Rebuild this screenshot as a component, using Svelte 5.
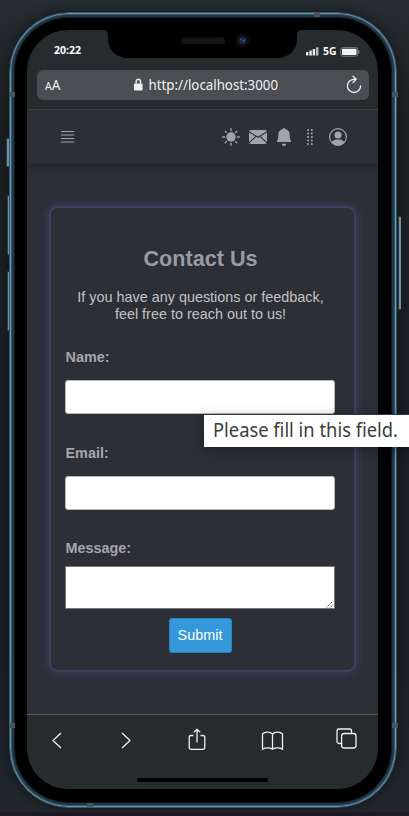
<script>
  const frameMarks = [
    { x: 314, y: 12, w: 6, h: 5 },
    { x: 9, y: 92, w: 6, h: 5 },
    { x: 392, y: 92, w: 6, h: 5 },
    { x: 9, y: 723, w: 6, h: 5 },
    { x: 392, y: 723, w: 6, h: 5 },
    { x: 87, y: 803, w: 6, h: 5 }
  ];
  const sideKeys = [
    { x: 6, y: 138, w: 3, h: 29 },
    { x: 7, y: 195, w: 2, h: 60 },
    { x: 7, y: 271, w: 2, h: 60 },
    { x: 398, y: 216, w: 3, h: 94 }
  ];
  const rays = [0, 45, 90, 135, 180, 225, 270, 315];
  const dots = [0, 1, 2, 3, 4];
</script>

<div class="desk">
  {#each sideKeys as k}
    <i class="key" style="left:{k.x}px;top:{k.y}px;width:{k.w}px;height:{k.h}px"></i>
  {/each}
  <div class="phone">
    <div class="screen">
      <div class="status">
        <b class="time"><svg width="28" height="14"><text x="0" y="11" textLength="27" lengthAdjust="spacingAndGlyphs">20:22</text></svg></b>
        <div class="signal">
          <svg width="54" height="14" viewBox="0 0 54 14">
            <g fill="#eee"><rect x="0" y="9" width="2.4" height="3.5" rx=".5" /><rect x="3.4" y="7.5" width="2.4" height="5" rx=".5" /><rect x="6.7" y="6" width="2.4" height="6.5" rx=".5" /><rect x="10" y="4.3" width="2.4" height="8.2" rx=".5" opacity=".75" /></g>
            <text x="17" y="12" textLength="13.5" lengthAdjust="spacingAndGlyphs">5G</text>
            <rect x="34.8" y="4.6" width="17" height="8.6" rx="2.2" fill="none" stroke="#8c9092" stroke-width=".8" />
            <rect x="36" y="5.8" width="14.6" height="6.2" rx="1.3" fill="#f4f4f4" />
            <path d="M52.8 7.4v3" stroke="#8c9092" />
          </svg>
        </div>
      </div>

      <div class="address">
        <span class="aa"><small>A</small>A</span>
        <svg class="url" width="148" height="22" viewBox="0 0 148 22">
          <path d="M3.1 9.5V7.7a2.2 2.5 0 0 1 4.4 0V9.5" fill="none" stroke="#f0f0f0" stroke-width="1.4" />
          <rect x="1" y="9.5" width="8.6" height="7" rx="1" fill="#f0f0f0" />
          <text x="15.5" y="16" textLength="129.5" lengthAdjust="spacingAndGlyphs">http://localhost:3000</text>
        </svg>
        <svg class="reload" width="18" height="22" viewBox="0 0 18 22" fill="none" stroke="#eee" stroke-width="1.3" stroke-linecap="round" stroke-linejoin="round"><path d="M10.300 5.300H9a6.600 6.600 0 1 0 6.600 6.600M8 2.200l3.200 3.100L8 8.500" /></svg>
      </div>

      <nav>
        <svg class="menu" width="14" height="13" viewBox="0 0 14 13"><path d="M0 1.500h13.300M0 5h13.300M0 8.500h13.300M0 12h13.300" stroke="#a19fa6" stroke-width="1.2" /></svg>
        <div class="icons">
          <svg width="18" height="18" viewBox="0 0 18 18"><circle cx="9" cy="9" r="4.7" fill="#a5a3aa" />{#each rays as r}<path d="M9 .7v2" stroke="#a5a3aa" stroke-width="1.3" stroke-linecap="round" transform="rotate({r} 9 9)" />{/each}</svg>
          <svg width="18" height="18" viewBox="0 0 18 18"><rect x="0" y="2" width="18" height="14" rx="2" fill="#a5a3aa" /><path d="M0 3.700l9 5.600 9-5.600M0 14.800l6.600-6.200M18 14.800l-6.600-6.200" fill="none" stroke="#2c2f38" stroke-width="1.1" /></svg>
          <svg width="16" height="18" viewBox="0 0 16 18"><path d="M8 0a1 1 0 0 1 1 1.100c3 .6 4.700 2.700 4.700 5.600 0 4.100.8 6.100 1.800 7.400H.5c1-1.300 1.800-3.300 1.800-7.400 0-2.900 1.700-5 4.700-5.600A1 1 0 0 1 8 0zM5.800 15.700h4.400a2.200 2.200 0 0 1-4.400 0z" fill="#a5a3aa" /></svg>
          <svg width="6" height="18" viewBox="0 0 6 18" fill="#a5a3aa">{#each dots as d}<circle cx="1.1" cy={1.9 + d * 3.5} r="1" /><circle cx="4.8" cy={1.9 + d * 3.5} r="1" />{/each}</svg>
          <svg width="18" height="18" viewBox="0 0 18 18"><circle cx="9" cy="9" r="8.4" fill="none" stroke="#a5a3aa" stroke-width="1.2" /><circle cx="9" cy="7" r="3.5" fill="#a5a3aa" /><path d="M2.700 14C4.200 12.100 6.200 11.600 9 11.600s4.800.5 6.300 2.400A8 8 0 0 1 9 17.400 8 8 0 0 1 2.700 14z" fill="#a5a3aa" /></svg>
        </div>
      </nav>

      <main>
        <form>
          <h2>Contact Us</h2>
          <p>If you have any questions or feedback,<br />feel free to reach out to us!</p>
          <label for="name">Name:</label>
          <input id="name" type="text" />
          <label for="email">Email:</label>
          <input id="email" type="text" />
          <label for="message">Message:</label>
          <div class="area">
            <textarea id="message"></textarea>
            <svg class="grip" width="7" height="7" viewBox="0 0 7 7"><path d="M.5 6.500l6-6M4 6.500L6.500 4" stroke="#444" stroke-width=".9" stroke-dasharray="1.6 .5" /></svg>
          </div>
          <button type="button">Submit</button>
        </form>
      </main>

      <footer>
        <div class="tools">
          <svg width="10" height="17" viewBox="0 0 10 17"><path d="M9 1L1 8.500 9 16" /></svg>
          <svg width="10" height="17" viewBox="0 0 10 17"><path d="M1 1l8 7.500L1 16" /></svg>
          <svg width="18" height="22" viewBox="0 0 18 22"><path d="M5.500 5.500H3a1.800 1.800 0 0 0-1.800 1.800v10.200A1.800 1.800 0 0 0 3 19.300h12a1.800 1.800 0 0 0 1.800-1.800V7.300A1.800 1.800 0 0 0 15 5.500h-2.500M9 12.500V-.8M5.700 2.400L9-.8l3.300 3.200" /></svg>
          <svg width="23" height="20" viewBox="0 0 22 20"><path d="M11 3.200C8.800.6 3.400.4 1 3v15.300c2.800-1.800 7.400-1.800 10 0 2.600-1.800 7.200-1.800 10 0V3C18.600.4 13.200.6 11 3.200zM11 3.200v15" /></svg>
          <svg width="21" height="21" viewBox="0 0 21 21"><rect x="5.600" y="5.500" width="14.400" height="14.500" rx="2.500" /><path d="M5.500 15.500H3A2 2 0 0 1 1 13.500V3A2 2 0 0 1 3 1h10.500A2 2 0 0 1 15.500 3v2.500" /></svg>
        </div>
        <div class="home"></div>
      </footer>
    </div>
  </div>

  <svg class="notch" width="199" height="30" viewBox="0 0 199 30">
    <path d="M0 0h199c-3.500 0-5 1.500-5 5v3c0 12-8 20-20 20H25C13 28 5 20 5 8V5c0-3.500-1.500-5-5-5z" fill="#000" />
    <rect x="78" y="7.5" width="44" height="6.5" rx="3.2" fill="#151515" />
    <circle cx="139.5" cy="10.5" r="7" fill="#0c0d0f" />
    <circle cx="139.5" cy="10.5" r="3.7" fill="#1a2547" />
    <circle cx="138" cy="9.5" r="1.1" fill="#49448a" /><circle cx="141" cy="10.5" r="1.2" fill="#355c9b" />
  </svg>
  {#each frameMarks as m}
    <i class="mark" style="left:{m.x}px;top:{m.y}px;width:{m.w}px;height:{m.h}px"></i>
  {/each}
  <div class="tip"><svg width="205" height="32"><text x="9" y="22" textLength="185" lengthAdjust="spacingAndGlyphs">Please fill in this field.</text></svg></div>
</div>

<style>
  :global(body) { margin: 0; background: #202428; }
  * { box-sizing: border-box; }
  svg { display: block; flex: none; overflow: visible; }
  .desk {
    position: relative; width: 409px; height: 816px; overflow: hidden;
    padding: 12px 12px 8px 9px;
    background: linear-gradient(180deg, #272c30 0, #1c2023 15%, #1c1f24 80%, #22272b 99.5%, #1f1924 99.6%);
    font-family: "Liberation Sans", Arial, sans-serif;
  }
  .phone {
    height: 796px; border: 1px solid #36566a; border-radius: 60px;
    padding: 17px 18px 18px 17px; background: #000;
    box-shadow: inset 0 0 0 1px #6d91a5, inset 0 0 0 2px #36566a, inset 0 0 0 4px #203645, inset 0 0 0 5px #10191f, 0 0 12px #0b0e12aa;
  }
  .screen {
    width: 351px; height: 759px; border-radius: 41px; overflow: hidden;
    display: flex; flex-direction: column; background: #262b2e;
  }
  .status { height: 40px; padding: 13px 18.5px 0 27px; display: flex; justify-content: space-between; }
  .status text { font: 700 11px "Open Sans", "Noto Sans", sans-serif; fill: #fff; }
  .address {
    height: 30px; margin: 0 9px 9px 10px; padding: 0 6px 0 8px; border-radius: 6px;
    background: #4a4d52; display: flex; align-items: center; justify-content: space-between; color: #eee;
  }
  .aa { font: 13.5px "Noto Sans", sans-serif; width: 30px; }
  .aa small { font-size: 10.5px; }
  .url { margin-right: auto; margin-left: 58px; }
  .url text { font: 13.5px "Noto Sans", sans-serif; fill: #f0f0f0; }
  nav {
    height: 55px; flex: none; position: relative; border-top: 1px solid #3c4143; background: #2c2f38;
    padding: 0 31.500px 0 34px; display: flex; align-items: center; justify-content: space-between;
    box-shadow: 0 2px 5px #191b20aa;
  }
  .menu { margin-bottom: 1px; }
  .icons { display: flex; align-items: center; }
  .icons svg:nth-child(2) { margin-left: 9px; }
  .icons svg:nth-child(3) { margin-left: 9px; }
  .icons svg:nth-child(4) { margin-left: 15.500px; }
  .icons svg:nth-child(5) { margin-left: 15.500px; }
  main { flex: 1; min-height: 0; padding: 44px 24px; background: #2c2f38; }
  form {
    width: 303px; height: 462px; border-radius: 7px; padding: 37px 20px 0 14px;
    background: #2c2f36; box-shadow: 0 0 0 2px #423f61, 0 0 10px 2px #484368;
    color: #a9a5a8; display: flex; flex-direction: column;
  }
  h2 { margin: 0; padding-left: 2px; text-align: center; font-size: 21.6px; line-height: 28px; color: #9b9aa2; }
  p { margin: 16px 0 0; padding-left: 2px; text-align: center; font-size: 14.4px; line-height: 17px; color: #c4c2c1; white-space: nowrap; }
  label { margin-top: 26px; height: 17px; padding-left: .5px; font-size: 14.4px; line-height: 17px; font-weight: 700; }
  input {
    display: block; width: 270px; height: 34px; margin: 14px 0 5px; padding: 0;
    border: 1px solid #b9b9ba; border-radius: 3px; background: #fff; flex: none;
  }
  #email { margin-bottom: 4px; }
  .area { position: relative; margin-top: 9.5px; height: 43px; flex: none; }
  textarea { display: block; width: 270px; height: 43px; margin: 0; padding: 0; resize: none; border: 1px solid #777; border-radius: 0; background: #fff; }
  .grip { position: absolute; right: 1px; bottom: 1px; }
  #email { margin-top: 13.5px; margin-bottom: 4.5px; }
  .area { margin-top: 9px; }
  button {
    align-self: center; width: 63px; height: 35px; margin: 9px 0 0 1px; padding: 0 0 1px;
    border: 1px solid #2c83bd; border-radius: 3px; background: #3498db; color: #fff; font: 14.4px "Liberation Sans", sans-serif;
  }
  footer { height: 75px; flex: none; border-top: 1px solid #54585b; background: #262b2e; }
  .tools { height: 51px; padding: 0 21px 0 25px; display: flex; align-items: center; fill: none; stroke: #f0f0f0; stroke-width: 1.3; stroke-linejoin: round; }
  .tools svg:nth-child(2) { margin-left: 59px; }
  .tools svg:nth-child(3) { margin-left: 57px; }
  .tools svg:nth-child(4) { margin-left: 54.5px; }
  .tools svg:nth-child(5) { margin-left: 52.5px; margin-top: -4px; }
  .home { width: 131px; height: 4px; border-radius: 2px; margin: 12px auto 0; background: #000; }
  .notch { position: absolute; left: 103px; top: 30px; }
  .mark { position: absolute; background: #46545e; }
  .key { position: absolute; background: #7190a0; border: 1px solid #263c49; border-right: 0; border-radius: 1px; }
  .tip {
    position: absolute; left: 204px; top: 415px; width: 205px; height: 32px;
    background: #fff; box-shadow: 0 -1px 0 #333638, 0 3px 14px #0005;
  }
  .tip text { font: 19px "Noto Sans", sans-serif; fill: #3d3d3d; }
</style>
